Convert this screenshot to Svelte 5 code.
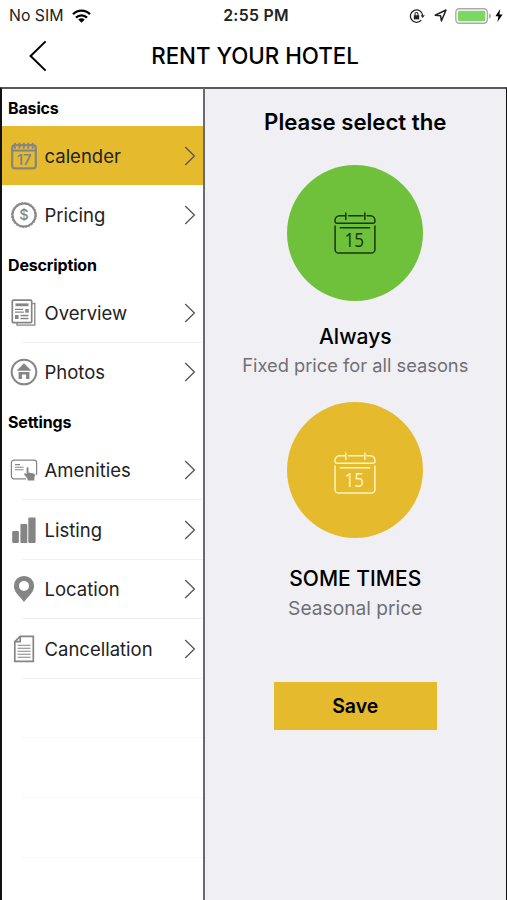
<script lang="ts">
    type Item = { id: string; label: string };

    const sections: { title: string; items: Item[] }[] = [
        {
            title: "Basics",
            items: [
                { id: "calendar", label: "calender" },
                { id: "pricing", label: "Pricing" },
            ],
        },
        {
            title: "Description",
            items: [
                { id: "overview", label: "Overview" },
                { id: "photos", label: "Photos" },
            ],
        },
        {
            title: "Settings",
            items: [
                { id: "amenities", label: "Amenities" },
                { id: "listing", label: "Listing" },
                { id: "location", label: "Location" },
                { id: "cancellation", label: "Cancellation" },
            ],
        },
    ];

    let active = $state("calendar");
</script>

{#snippet icon(id: string)}
    <svg class="icon" viewBox="0 0 28 28" fill="none" stroke="#858585">
        {#if id === "calendar"}
            <rect x="2.2" y="3.2" width="23.6" height="23.2" rx="3" stroke-width="2.2" />
            <path d="M2 8.6h24" stroke-width="2" />
            <path d="M5 .8v6M9.4 .8v6M13.8 .8v6M18.2 .8v6M22.6 .8v6" stroke-width="1.8" />
            <text x="14.2" y="22.8" class="num17">17</text>
        {:else if id === "pricing"}
            <circle cx="14" cy="14" r="11.5" stroke-width="2" />
            <circle cx="14" cy="14" r="12.6" stroke-width=".8" stroke-dasharray="2 1.3" />
            <text x="14" y="19.2" class="dollar">$</text>
        {:else if id === "overview"}
            <path d="M22.5 4.5h2.3v21.6H7v-2.6" stroke-width="1.3" />
            <rect x="2.3" y="1.2" width="19.4" height="22.4" rx="1" stroke-width="1.7" />
            <path d="M5.5 5.8h13" stroke-width="2.8" />
            <path d="M5 10.3h8M5 13.2h9M10.5 16.5h8M10.5 19.5h8" stroke-width="1.3" />
            <path d="M5 18h3.6M15.3 11.8h3.4" stroke-width="3.8" />
        {:else if id === "photos"}
            <circle cx="14" cy="14" r="12.3" stroke-width="2" />
            <path d="M14 5.2 21.4 12.8H6.6z" fill="#858585" stroke="none" />
            <path d="M8.6 14.1h10.8v6.9h-3.3v-4.6h-4.2v4.6H8.6z" fill="#858585" stroke="none" />
        {:else if id === "amenities"}
            <path d="M16 22.8H4a2.6 2.6 0 0 1-2.6-2.6V6.7A2.6 2.6 0 0 1 4 4.1h20a2.6 2.6 0 0 1 2.6 2.6V19" stroke-width="1.2" />
            <path d="M5 8.6h5M5 11.2h8.5M5 13.8h8.5" stroke-width="1.1" />
            <path d="M16.6 12.4c0-1.4 1.9-1.4 1.9 0v4.1l5.2 1c1 .2 1.4.9 1.3 1.8l-.7 3.2v2h-6.7v-1.8l-3.2-3.9c-.9-1.2.5-2.2 1.4-1.3l.8.7z" fill="#858585" stroke="none" />
        {:else if id === "listing"}
            <g fill="#858585" stroke="none">
                <rect x="2.2" y="15" width="6.7" height="12" rx="1" />
                <rect x="10.4" y="8" width="6.9" height="19" rx="1" />
                <rect x="18.3" y="1.6" width="7.3" height="25.4" rx="1" />
            </g>
        {:else if id === "location"}
            <path fill-rule="evenodd" d="M14 .9A10 10 0 0 0 3.9 11c0 6.4 6.2 10.5 10.1 15.9C17.9 21.5 24.1 17.4 24.1 11A10 10 0 0 0 14 .9m0 5a5 5 0 1 1 0 10 5 5 0 0 1 0-10" fill="#858585" stroke="none" />
        {:else}
            <path d="M10.2 1.4h13.1v24.9H4.8V6.7zM10.2 1.4v5.3H4.8" stroke-width="1.7" />
            <path d="M7.6 10.3h13M7.6 13.3h13M7.6 16.3h13M7.6 19.3h13M7.6 22.3h13" stroke-width="1.1" />
        {/if}
    </svg>
{/snippet}

{#snippet day()}
    <svg class="day" viewBox="0 0 42 42" fill="none" stroke="currentColor" stroke-width="1.5" stroke-linecap="round">
        <path d="M11 3.8H5.5a4.5 4.5 0 0 0-4.4 4.4v1.2A1.8 1.8 0 0 0 2.9 11.2h36.2a1.8 1.8 0 0 0 1.8-1.8V8.2a4.5 4.5 0 0 0-4.4-4.4H33M14.5 3.8h14.5M11.8 1v6.4M30.8 1v6.4" />
        <path d="M1.1 14v23.4a3.6 3.6 0 0 0 3.6 3.6h32.6a3.6 3.6 0 0 0 3.6-3.6V14M6.3 15.7h29.3" />
        <text x="10.4" y="35.4" textLength="19.6" lengthAdjust="spacingAndGlyphs">15</text>
    </svg>
{/snippet}

<div class="screen">
    <div class="status">
        <div class="carrier">
            <span>No SIM</span>
            <svg width="19" height="14" viewBox="0 0 19 14" fill="none" stroke="#000" stroke-width="2.3">
                <path d="M1 5.2a12.1 12.1 0 0 1 17 0M4 8.6a7.8 7.8 0 0 1 11 0" />
                <path d="M6.3 10.6a4.6 4.6 0 0 1 6.4 0L9.5 13.8z" fill="#000" stroke="none" />
            </svg>
        </div>
        <div class="time">2:55 PM</div>
        <div class="indicators">
            <svg width="16" height="16" viewBox="0 0 16 16" fill="none" stroke="#222" stroke-width="1.3">
                <path d="M12.3 12.1A6.2 6.2 0 1 1 13.7 7.4" />
                <path d="M11.6 7.2h4.2l-2.1 2.7z" fill="#222" stroke="none" />
                <path d="M4.8 7.2h5.4v4.2H4.8z" fill="#222" stroke="none" />
                <path d="M6 7.4V6a1.5 1.5 0 0 1 3 0v1.4" stroke-width="1.1" />
            </svg>
            <svg class="arrow" width="13" height="13" viewBox="0 0 13 13" fill="none" stroke="#222" stroke-width="1.5" stroke-linejoin="round">
                <path d="M1.2 6.2 12 1 7.4 12 6.6 6.8z" />
            </svg>
            <svg class="battery" width="37" height="16" viewBox="0 0 37 16">
                <rect x=".8" y=".8" width="31.6" height="14.4" rx="3.6" fill="#fff" stroke="#aaa" stroke-width="1.4" />
                <rect x="2.8" y="2.8" width="27.6" height="10.4" rx="1.6" fill="#7dd765" />
                <path d="M34 5.4q2 .6 2 2.6t-2 2.6z" fill="#aaa" />
            </svg>
            <svg width="8" height="13" viewBox="0 0 8 13">
                <path d="M5.2 0 .4 7.2h3L2.4 13l5.2-7.6H4.4z" />
            </svg>
        </div>
    </div>

    <header>
        <button type="button" class="back" aria-label="Back">
            <svg width="18" height="32" viewBox="0 0 18 32" fill="none" stroke="#000" stroke-width="2">
                <path d="M16.6 1.4 1.6 16l15 14.6" />
            </svg>
        </button>
        <h1>RENT YOUR HOTEL</h1>
    </header>

    <div class="body">
        <nav>
            {#each sections as section}
                <h2>{section.title}</h2>
                {#each section.items as item, i}
                    <button
                        type="button"
                        class="row"
                        class:active={item.id === active}
                        class:last={i === 1 && section.items.length === 2}
                        onclick={() => (active = item.id)}
                    >
                        {@render icon(item.id)}
                        <span class="label">{item.label}</span>
                        <svg class="chevron" width="12" height="20" viewBox="0 0 12 20" fill="none" stroke="#555" stroke-width="1.3">
                            <path d="M1.2 1 10.4 10l-9.2 9" />
                        </svg>
                    </button>
                {/each}
            {/each}
            {#each [1, 2, 3] as n (n)}
                <div class="row empty"></div>
            {/each}
        </nav>

        <main>
            <h3>Please select the</h3>
            <button type="button" class="circle green" aria-label="Always">{@render day()}</button>
            <div class="name always">Always</div>
            <div class="note fixed">Fixed price for all seasons</div>
            <button type="button" class="circle yellow" aria-label="Some times">{@render day()}</button>
            <div class="name some">SOME TIMES</div>
            <div class="note seasonal">Seasonal price</div>
            <button type="button" class="save">Save</button>
        </main>
    </div>
</div>

<style>
    :global(body) {
        margin: 0;
        background: #fff;
    }

    .screen {
        width: 507px;
        height: 900px;
        display: flex;
        flex-direction: column;
        overflow: hidden;
        background: #fff;
        color: #000;
        font-family: Inter, "Liberation Sans", sans-serif;
    }

    button {
        border: none;
        padding: 0;
        margin: 0;
        background: none;
        font-family: inherit;
        color: inherit;
        cursor: pointer;
    }

    svg {
        display: block;
        flex: none;
    }

    h1, h2, h3 {
        margin: 0;
    }

    /* Status bar */
    .status {
        height: 30px;
        box-sizing: border-box;
        padding: 0 4px 0 9px;
        display: grid;
        grid-template-columns: 1fr auto 1fr;
        align-items: center;
        font-size: 15.8px;
        line-height: 31px;
    }

    .carrier {
        display: flex;
        align-items: center;
        gap: 9px;
        color: #222;
    }

    .time {
        font-weight: 600;
        letter-spacing: 0.3px;
        color: #222;
    }

    .indicators {
        display: flex;
        align-items: center;
        justify-content: flex-end;
    }

    .arrow {
        margin: 0 8px 0 9px;
    }

    .battery {
        margin-right: 3px;
    }

    /* Nav bar */
    header {
        height: 57px;
        display: grid;
        grid-template-columns: 60px 1fr 60px;
        align-items: center;
    }

    .back {
        padding: 0 0 5px 29px;
    }

    h1 {
        font-size: 22.3px;
        font-weight: 500;
        line-height: 28px;
        text-align: center;
        white-space: nowrap;
        padding-bottom: 6px;
        padding-left: 3px;
    }

    .body {
        flex: 1;
        min-height: 0;
        display: grid;
        grid-template-columns: 202.5px 1fr;
        border: solid #111;
        border-width: 2px 1px 0 2px;
        border-top-color: #58585a;
    }

    /* Sidebar */
    nav {
        border-right: 2px solid #6a6a6c;
        overflow: hidden;
        margin-top: -1px;
    }

    h2 {
        height: 38px;
        box-sizing: border-box;
        padding: 1px 0 0 6px;
        font-size: 16px;
        font-weight: 700;
        line-height: 38px;
        letter-spacing: -0.15px;
    }

    .row {
        width: 100%;
        height: 59.6px;
        box-sizing: border-box;
        display: flex;
        align-items: center;
        padding: 0 6.5px 0.4px 8px;
        background: linear-gradient(#f0f0f0, #f0f0f0) 20px 100% / 100% 1px no-repeat;
        text-align: left;
    }

    .row.empty {
        background-image: linear-gradient(#f7f7f7, #f7f7f7);
    }

    .row.last {
        background: none;
    }

    .row.active {
        background: linear-gradient(#e6ba2d, #e6ba2d) 0 0 / 100% 59px no-repeat;
    }

    .icon {
        width: 28px;
        height: 28px;
    }

    .label {
        flex: 1;
        margin-left: 6.5px;
        font-size: 18.5px;
        line-height: 24px;
        white-space: nowrap;
        color: #222;
    }

    .num17 {
        font-size: 14.5px;
        font-weight: 600;
        text-anchor: middle;
        fill: #858585;
        stroke: none;
    }

    .dollar {
        font-size: 14.5px;
        font-weight: 500;
        text-anchor: middle;
        fill: #858585;
        stroke: none;
    }

    /* Content */
    main {
        display: flex;
        flex-direction: column;
        align-items: center;
        background: #efeff4;
    }

    h3 {
        margin-top: 19px;
        font-size: 22.2px;
        font-weight: 600;
        line-height: 28px;
    }

    .circle {
        width: 136px;
        height: 136px;
        border-radius: 50%;
        display: flex;
        align-items: center;
        justify-content: center;
    }

    .green {
        margin-top: 28.5px;
        background: #6fc13b;
        color: #17380a;
    }

    .yellow {
        margin-top: 23.5px;
        background: #e6ba2d;
        color: #fff3c4;
    }

    .day {
        width: 42px;
        height: 42px;
    }

    .yellow .day {
        margin-top: 6px;
    }

    .day text {
        font-family: "Open Sans", sans-serif;
        font-size: 20px;
        fill: currentColor;
        stroke: none;
    }

    .name {
        font-size: 21px;
        font-weight: 500;
        line-height: 28px;
    }

    .always {
        margin-top: 22.2px;
    }

    .some {
        margin-top: 27px;
    }

    .note {
        font-size: 19.2px;
        line-height: 28px;
        color: #707074;
        white-space: nowrap;
    }

    .fixed {
        font-size: 18.3px;
    }

    .seasonal {
        margin-top: 1px;
    }

    .save {
        width: 163px;
        height: 48px;
        margin-top: 60px;
        background: #e6ba2d;
        font-size: 19.5px;
        font-weight: 600;
    }
</style>
